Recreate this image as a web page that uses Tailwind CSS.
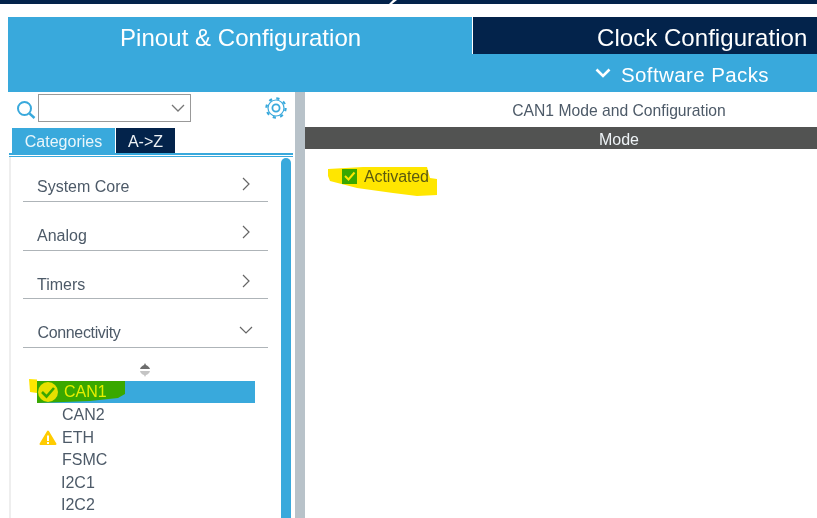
<!DOCTYPE html>
<html><head><meta charset="utf-8"><script src="https://cdn.jsdelivr.net/npm/@tailwindcss/browser@4"></script></head>
<body class="w-[817px] h-[518px] overflow-hidden bg-white font-['Liberation_Sans',Arial,sans-serif] relative">
<div class="h-[4px] bg-[#03234b]"></div>
<div class="h-[13px]"></div>
<div class="ml-[8px] flex h-[37px]">
  <div class="w-[464px] bg-[#39a9dc] text-white text-[24px] tracking-[0.05px] leading-[42px] pl-[112px]">Pinout &amp; Configuration</div>
  <div class="w-[1px] bg-white"></div>
  <div class="flex-1 min-w-0 bg-[#03234b] text-white text-[24px] tracking-[0.05px] leading-[42px] pl-[124px] whitespace-nowrap">Clock Configuration</div>
</div>
<div class="ml-[8px] h-[38px] bg-[#39a9dc] flex items-center pl-[587px] text-white text-[20.5px] gap-[10px]">
  <svg width="16" height="10" viewBox="0 0 16 10" fill="none"><path d="M1.5 1.5 L8 8 L14.5 1.5" stroke="#fff" stroke-width="2.6"/></svg>
  <span class="whitespace-nowrap tracking-[0.4px] pt-[4px]">Software Packs</span>
</div>
<div class="flex h-[426px]">
  <div class="w-[295px] shrink-0 flex flex-col">
    <div class="h-[36px] flex items-start">
      <svg class="ml-[16px] mt-[8px]" width="20" height="20" viewBox="0 0 20 20" fill="none"><circle cx="8.5" cy="8.5" r="6.5" stroke="#39a9dc" stroke-width="2"/><path d="M13.5 13.5 L18.5 18" stroke="#39a9dc" stroke-width="2.4"/></svg>
      <div class="ml-[2px] mt-[2px] w-[153px] h-[28px] border border-[#999] flex items-center justify-end pr-[5px]">
        <svg width="14" height="8" viewBox="0 0 14 8" fill="none"><path d="M1 1 L7 7 L13 1" stroke="#777" stroke-width="1.3"/></svg>
      </div>
      <svg class="ml-[74px] mt-[5px]" width="22" height="22" viewBox="0 0 22 22" fill="none"><circle cx="11" cy="11" r="3.6" stroke="#39a9dc" stroke-width="1.8"/><circle cx="11" cy="11" r="8" stroke="#39a9dc" stroke-width="1.2"/><circle cx="11" cy="11" r="9.6" stroke="#39a9dc" stroke-width="2.2" stroke-dasharray="3.2 4.34"/></svg>
    </div>
    <div class="flex ml-[12px] h-[25px] text-[16px] leading-[27px]">
      <div class="w-[103px] bg-[#39a9dc] text-[#eaf6fb] text-center">Categories</div>
      <div class="w-[1px]"></div>
      <div class="w-[59px] bg-[#03234b] text-[#eef2f6] text-center">A-&gt;Z</div>
    </div>
    <div class="ml-[9px] w-[284px] h-[2px] bg-[#39a9dc]"></div>
    <div class="ml-[9px] w-[284px] h-[1px]"></div>
    <div class="ml-[9px] w-[284px] h-[1px] bg-[#39a9dc]"></div>
    <div class="ml-[9px] w-[284px] flex-1 flex min-h-0 border-l-[2px] border-[#eeeeee]">
      <div class="w-[270px] shrink-0 text-[16px] text-[#4d5a68]">
        <div class="ml-[12px] w-[245px] h-[45px] border-b border-[#aeb4b8] flex items-end justify-between pb-[5px] pl-[14px] pr-[18px]"><span class="leading-[18px]">System Core</span><svg class="mb-[5px]" width="8" height="14" viewBox="0 0 8 14" fill="none"><path d="M1 1 L7 7 L1 13" stroke="#666" stroke-width="1.2"/></svg></div>
        <div class="ml-[12px] w-[245px] h-[49px] border-b border-[#aeb4b8] flex items-end justify-between pb-[5px] pl-[14px] pr-[18px]"><span class="leading-[18px]">Analog</span><svg class="mb-[6px]" width="8" height="14" viewBox="0 0 8 14" fill="none"><path d="M1 1 L7 7 L1 13" stroke="#666" stroke-width="1.2"/></svg></div>
        <div class="ml-[12px] w-[245px] h-[48px] border-b border-[#aeb4b8] flex items-end justify-between pb-[4px] pl-[14px] pr-[18px]"><span class="leading-[18px]">Timers</span><svg class="mb-[6px]" width="8" height="14" viewBox="0 0 8 14" fill="none"><path d="M1 1 L7 7 L1 13" stroke="#666" stroke-width="1.2"/></svg></div>
        <div class="ml-[12px] w-[245px] h-[49px] border-b border-[#aeb4b8] flex items-end justify-between pb-[5px] pl-[14.5px] pr-[15px]"><span class="leading-[18px] tracking-[-0.35px]">Connectivity</span><svg class="mb-[8px]" width="14" height="8" viewBox="0 0 14 8" fill="none"><path d="M1 1 L7 7 L13 1" stroke="#666" stroke-width="1.2"/></svg></div>
        <div class="h-[33px] flex items-center pl-[129px] pt-[10px]"><svg width="10" height="14" viewBox="0 0 10 14"><path d="M5 0 L6 2 C8 3 9.5 4 10 6 H0 C.5 4 2 3 4 2Z" fill="#6d6d6d"/><path d="M0 8 H10 C9.5 10 8 11.5 6 12 L5 14 L4 12 C2 11.5 .5 10 0 8Z" fill="#c4c4c4"/></svg></div>
        <div class="ml-[26px] w-[218px] h-[22px] bg-[#39a9dc] flex items-center text-[#e6f16a] pl-[27px] leading-[22px]">CAN1</div>
        <div class="ml-[26px] h-[22.5px] leading-[24px] pl-[25px]">CAN2</div>
        <div class="ml-[26px] h-[22.5px] leading-[24px] pl-[25px] relative">ETH</div>
        <div class="ml-[26px] h-[22.5px] leading-[24px] pl-[25px]">FSMC</div>
        <div class="ml-[26px] h-[22.5px] leading-[24px] pl-[24px]">I2C1</div>
        <div class="ml-[26px] h-[22.5px] leading-[24px] pl-[24px]">I2C2</div>
      </div>
      <div class="w-[10px] h-[380px] bg-[#39a9dc] rounded-t-[5px] mt-[1px]"></div>
    </div>
  </div>
  <div class="w-[10px] shrink-0 bg-[#b8c2c9]"></div>
  <div class="flex-1 min-w-0 flex flex-col">
    <div class="h-[35px] pl-[116px] text-center text-[15.7px] leading-[37px] text-[#4d5a68]">CAN1 Mode and Configuration</div>
    <div class="h-[22px] pl-[116px] bg-[#525352] text-center text-[16px] leading-[25px] text-[#eef3f6]">Mode</div>
  </div>
</div>
<svg class="absolute left-0 top-0 pointer-events-none" width="817" height="518" viewBox="0 0 817 518">
  <path d="M393 0 L397 0 L392 4 L389 4Z" fill="#fff"/>
  <path d="M328 169 L363 167 L427 167 L430 178 L437 179 L437 195 L417 196 L393 193 L357 188 L330 181 L328 176Z" fill="#ffe600" style="mix-blend-mode:multiply"/>
  <rect x="342" y="169" width="15" height="15" fill="#3aa700"/>
  <path d="M345 176 L348.5 179.5 L354.5 172.5" stroke="#ffe600" stroke-width="2" fill="none"/>
  <path d="M37 381 L125 381 L125 394 L118 398 L90 401 L37 403Z" fill="#fffd00" style="mix-blend-mode:multiply"/>
  <path d="M29 379 L37 379.5 L37 393 L30 392Z" fill="#ffe600"/>
  <circle cx="48" cy="392" r="10" fill="#e6e000"/>
  <path d="M42 392 L46.5 396.5 L54 388" stroke="#3aa700" stroke-width="2.6" fill="none"/>
  <path d="M48 431.5 L55.5 444 H40.5Z" fill="#ffcc00" stroke="#ffcc00" stroke-width="2" stroke-linejoin="round"/>
  <path d="M48 435.5 V441 M48 442 V444" stroke="#fff" stroke-width="2"/>
</svg>
<span class="absolute left-[364px] top-[168px] text-[16px] leading-[18px] tracking-[-0.1px] text-[#5b5a10]">Activated</span>
</body></html>
